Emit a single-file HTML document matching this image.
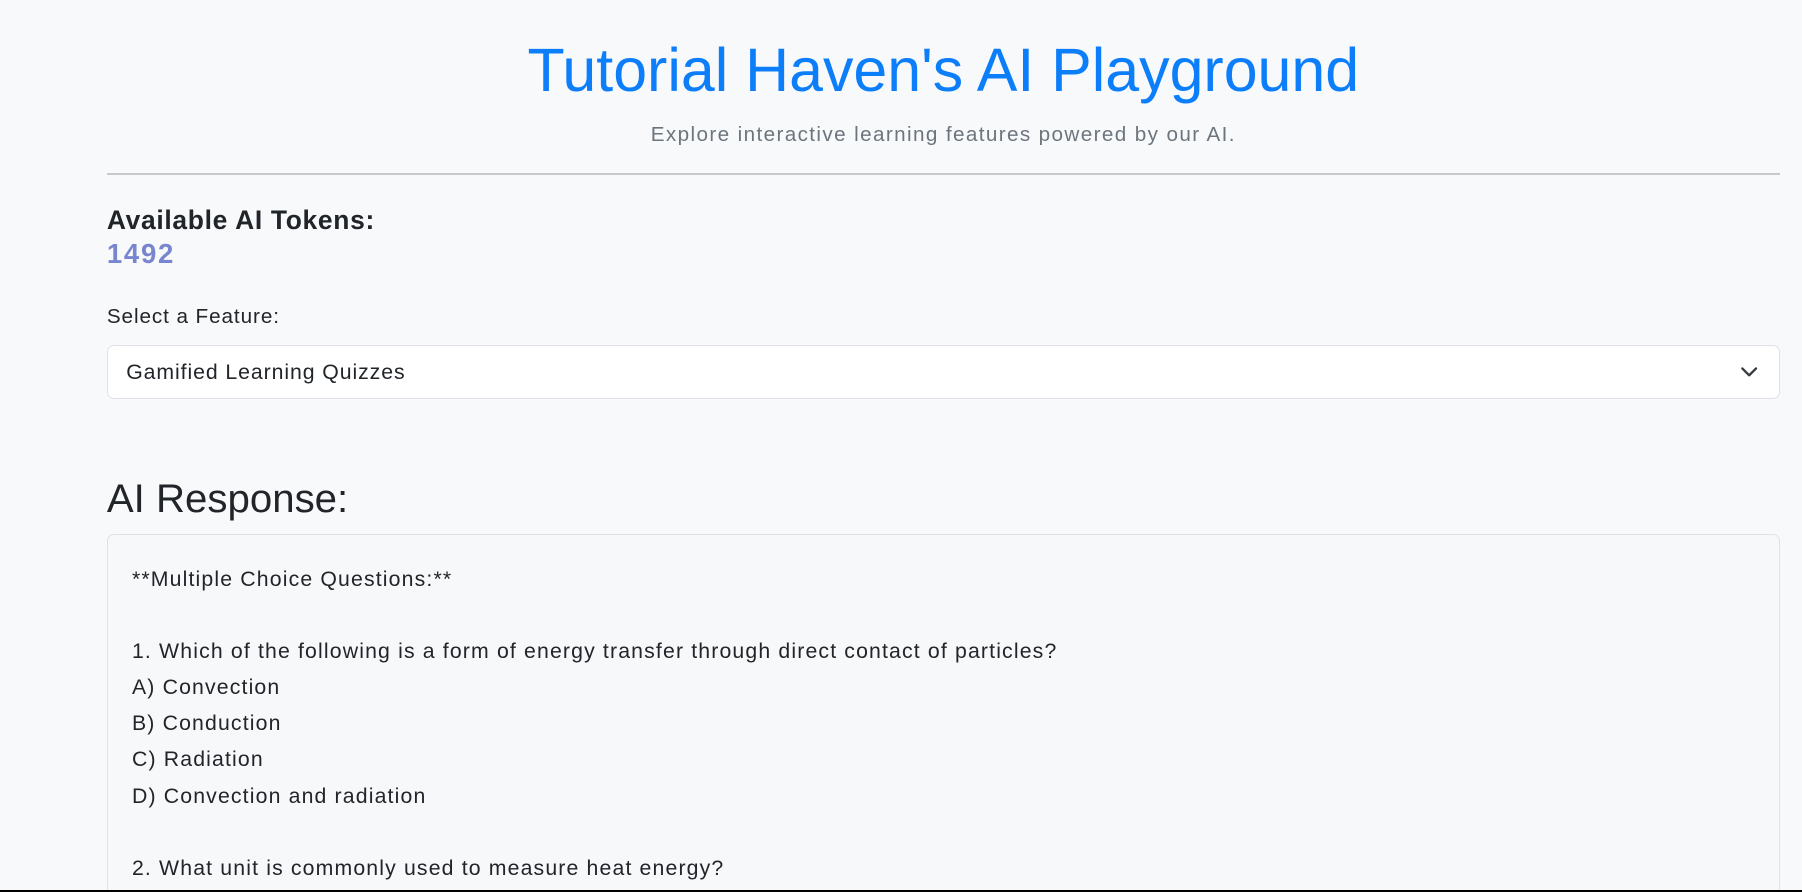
<!DOCTYPE html>
<html><head><meta charset="utf-8"><style>
html,body{margin:0;padding:0;}
body{background:#f8f9fa;width:1802px;height:892px;overflow:hidden;position:relative;font-family:"Liberation Sans",sans-serif;color:#212529;}
#z{zoom:1.149;width:1568px;position:relative;height:776px;overflow:hidden;}
.c{position:absolute;left:93px;width:1456px;}
h1{margin:0;position:absolute;top:30px;left:93px;width:1456px;text-align:center;color:#0d7ef9;font-weight:500;font-size:53px;line-height:64px;letter-spacing:0px;}
.sub{position:absolute;top:105px;left:93px;width:1456px;text-align:center;color:#6c757d;font-size:18px;line-height:24px;letter-spacing:1.2px;}
hr{position:absolute;top:151px;left:93px;width:1456px;margin:0;border:0;border-top:2px solid #c8c9cb;}
.t1{top:177px;font-size:23px;font-weight:600;line-height:30px;letter-spacing:0.6px;}
.t2{top:206px;font-size:24px;font-weight:700;color:#7986cf;line-height:30px;letter-spacing:1.5px;}
.t3{top:264px;font-size:18px;line-height:24px;letter-spacing:0.8px;}
.sel{top:300px;height:47px;background:#fff;border:1px solid #dee2e6;border-radius:6px;box-sizing:border-box;width:1456px;}
.sel span{position:absolute;left:16px;top:12px;font-size:18.5px;line-height:24px;letter-spacing:0.8px;}
.sel svg{position:absolute;right:18px;top:17px;}
.h2{top:410px;font-size:35px;font-weight:500;line-height:48px;}
.box{top:465px;height:330px;border:1px solid #dee2e6;border-radius:6px;box-sizing:border-box;background:#f7f8fa;}
.box div{position:absolute;left:21px;top:22px;font-size:18.5px;line-height:31.5px;white-space:pre;letter-spacing:1px;}
.bl{position:absolute;left:0;top:890px;width:1802px;height:2px;background:#000;}
</style></head><body><div id="z">
<h1>Tutorial Haven's AI Playground</h1>
<div class="sub">Explore interactive learning features powered by our AI.</div>
<hr>
<div class="c t1">Available AI Tokens:</div>
<div class="c t2">1492</div>
<div class="c t3">Select a Feature:</div>
<div class="c sel"><span>Gamified Learning Quizzes</span><svg width="16" height="12" viewBox="0 0 16 12"><path d="M2 3l6 6 6-6" fill="none" stroke="#343a40" stroke-width="2" stroke-linecap="round" stroke-linejoin="round"/></svg></div>
<div class="c h2">AI Response:</div>
<div class="c box"><div>**Multiple Choice Questions:**

1. Which of the following is a form of energy transfer through direct contact of particles?
A) Convection
B) Conduction
C) Radiation
D) Convection and radiation

2. What unit is commonly used to measure heat energy?</div></div>
</div><div class="bl"></div></body></html>
